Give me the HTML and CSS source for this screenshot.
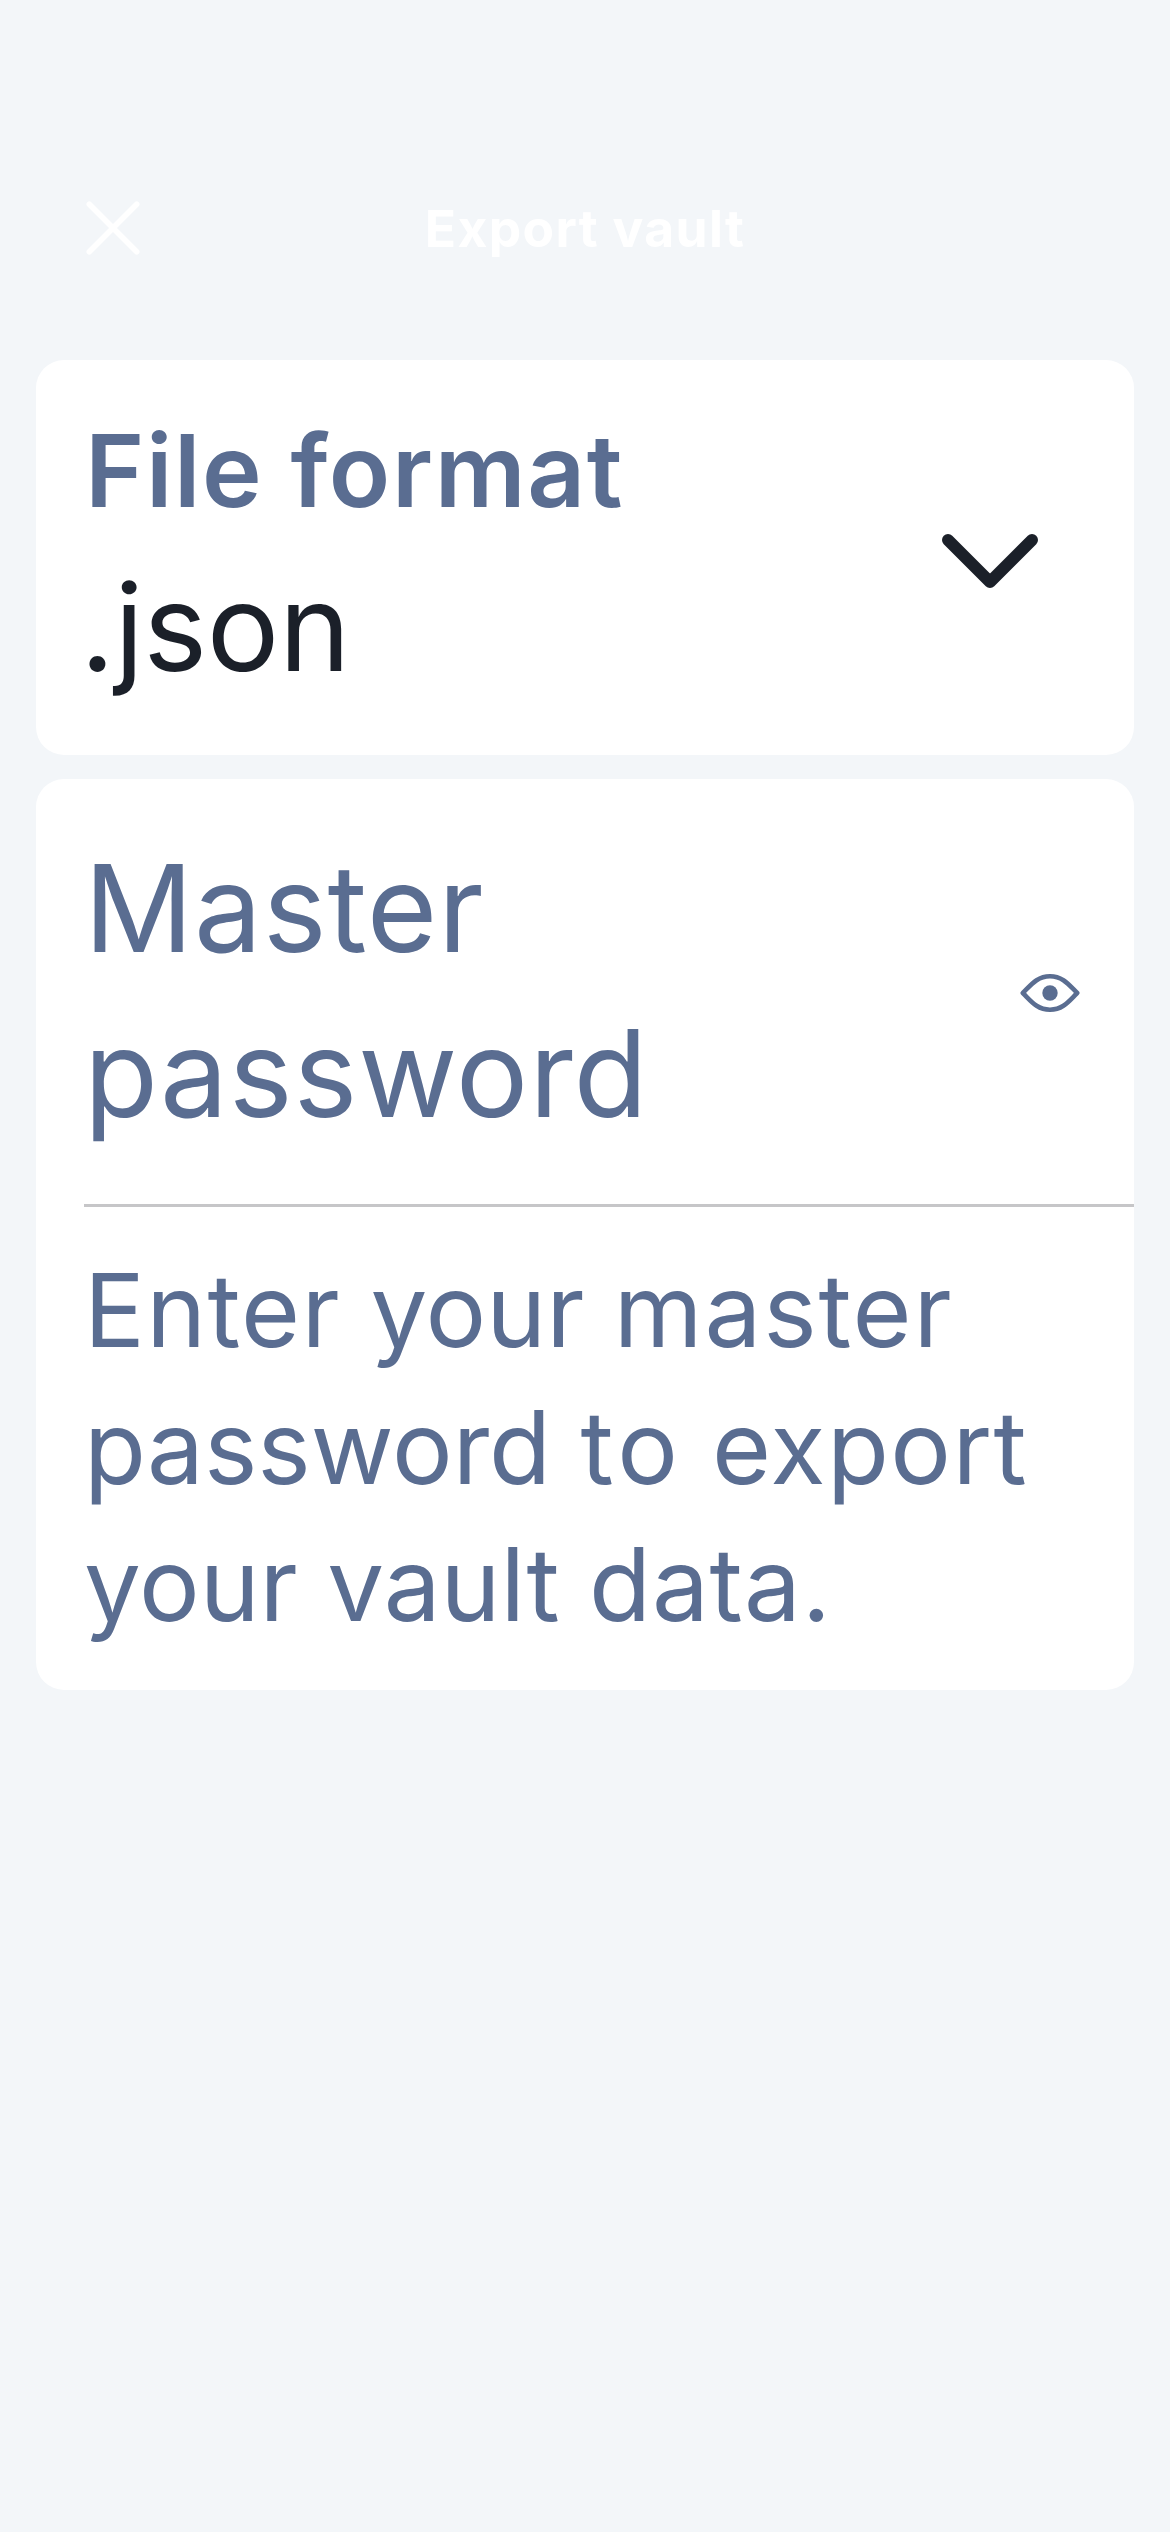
FILE: index.html
```html
<!DOCTYPE html>
<html lang="en">
<head>
<meta charset="utf-8">
<title>Export vault</title>
<link rel="stylesheet" href="styles.css">
</head>
<body>
<header class="nav">
  <button class="nav-close" aria-label="Close">
    <svg class="icon-close" viewBox="0 0 54 54"><path d="M3.3 3.3 50.7 50.7M50.7 3.3 3.3 50.7"/></svg>
  </button>
  <h1 class="nav-title">Export vault</h1>
</header>
<main class="content">
  <section class="card format">
    <div class="format-text">
      <div class="format-label">File format</div>
      <div class="format-value">.json</div>
    </div>
    <svg class="icon-chevron" viewBox="0 0 96 54"><path d="M6 6 48 48 90 6"/></svg>
  </section>
  <section class="card">
    <div class="field">
      <label class="field-label">Master password</label>
      <svg class="icon-eye" viewBox="0 0 60 38"><path class="lid" d="M2.8 19C11 11 17 2.3 30 2.3S49 11 57.2 19C49 27 43 35.7 30 35.7S11 27 2.8 19Z"/><circle class="pupil" cx="30" cy="19" r="7.7"/></svg>
    </div>
    <p class="help"><span class="wide">Enter</span> your <span class="wider">master</span> password <span class="widest">to</span> <span class="wide">export</span> your vault <span class="loose">data.</span></p>
  </section>
</main>
</body>
</html>
```
FILE: styles.css
```css
* { box-sizing: border-box; margin: 0; }

body {
  min-height: 2532px;
  background: #f3f6f9;
  color: #5a6d91;
  font-family: Inter, "Liberation Sans", sans-serif;
}

.nav {
  height: 360px;
  padding: 95px 86px 0;
  display: grid;
  grid-template-columns: 54px 1fr 54px;
  align-items: center;
  color: #fff;
}
.nav-close { width: 54px; height: 54px; padding: 0; border: 0; background: none; color: inherit; }
.icon-close { display: block; width: 54px; height: 54px; fill: none; stroke: currentColor; stroke-width: 5.6; stroke-linecap: round; }
.nav-title { font-size: 51.5px; line-height: 64px; font-weight: 700; letter-spacing: 1.35px; text-align: center; }

.content { display: grid; gap: 24px; padding: 0 36px; }
.card { background: #fff; border-radius: 28px; padding-left: 48px; }

.format { display: flex; justify-content: space-between; align-items: center; height: 395px; padding-right: 96px; }
.format-label { margin: -2px 0 0 1px; font-size: 101px; line-height: 120px; font-weight: 600; letter-spacing: 1.6px; }
.format-value { margin: 15px 0 -7px -4px; font-size: 121px; line-height: 165px; letter-spacing: -.4px; color: #1b2029; }
.icon-chevron { width: 96px; height: 54px; margin-top: 7px; fill: none; stroke: #1b2029; stroke-width: 12; stroke-linecap: round; stroke-linejoin: round; }

.field {
  display: flex;
  justify-content: space-between;
  align-items: center;
  height: 428px;
  padding-right: 54px;
  border-bottom: 3px solid #c6c6c8;
}
.field-label { width: 620px; padding-bottom: 2px; font-size: 121px; line-height: 165px; letter-spacing: .8px; }
.icon-eye { width: 60px; height: 38px; margin-top: 2px; }
.lid { fill: none; stroke: #5a6d91; stroke-width: 4.6; stroke-linejoin: round; }
.pupil { fill: #5a6d91; }

.help { padding: 35px 80px 37px 0; font-size: 101.3px; line-height: 137px; word-spacing: 1px; }
.loose { letter-spacing: .8px; }
.wide { letter-spacing: 1.4px; }
.wider { letter-spacing: 1.9px; }
.widest { letter-spacing: 4.5px; }
```
